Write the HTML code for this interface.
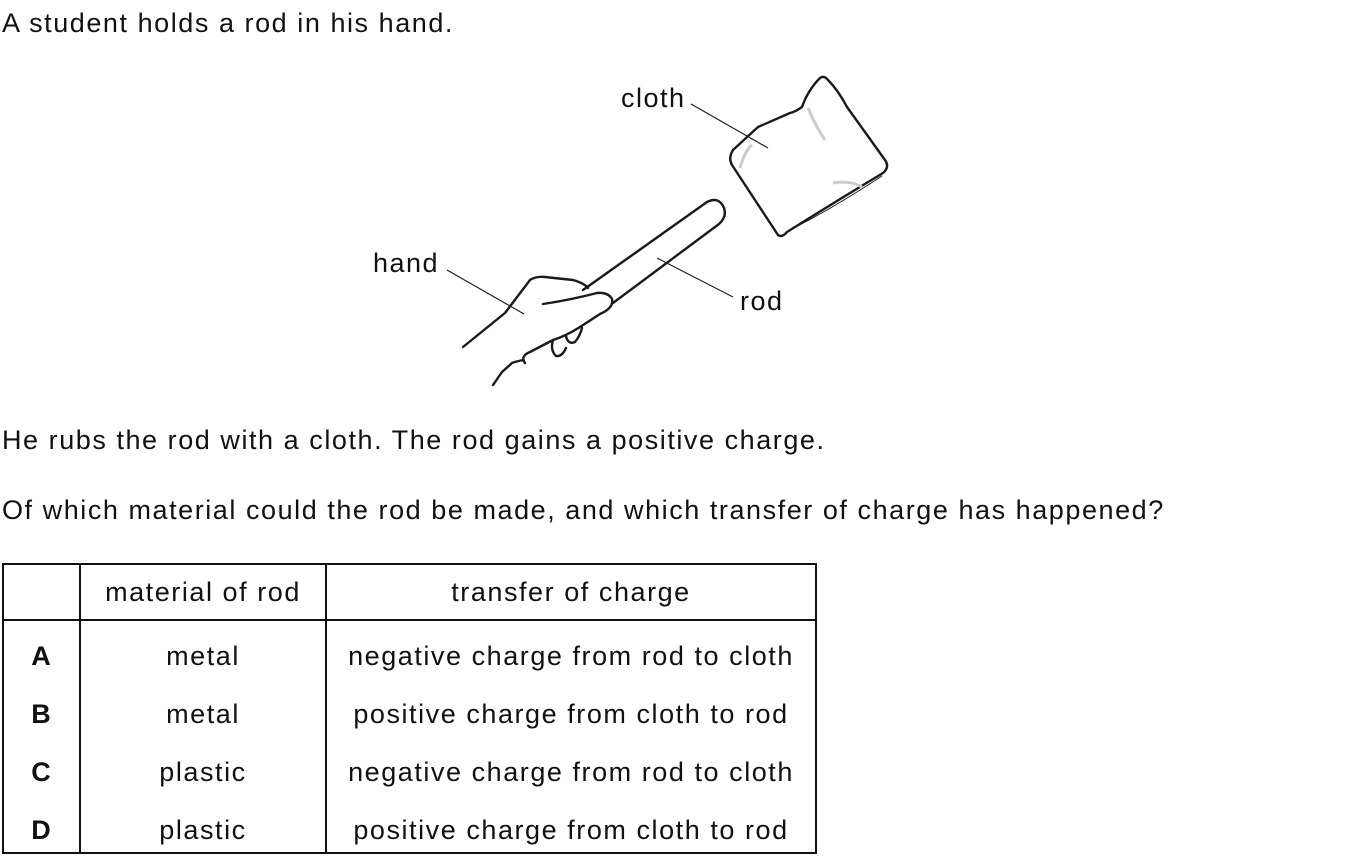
<!DOCTYPE html>
<html><head><meta charset="utf-8"><style>
body{margin:0;width:1354px;height:864px;background:#fff;position:relative;overflow:hidden;font-family:"Liberation Sans",sans-serif;color:#111}
.t{position:absolute;white-space:nowrap;font-size:27px;line-height:30px;letter-spacing:1.55px}
.c{position:absolute;text-align:center;font-size:27px;line-height:30px;white-space:nowrap;letter-spacing:1.55px}
.b{font-weight:bold;letter-spacing:0}
.hl{position:absolute;background:#111}
</style></head><body>
<div class="t" style="left:2px;top:8px">A student holds a rod in his hand.</div>
<svg style="position:absolute;left:0;top:0" width="1354" height="420">
<g fill="none" stroke="#1a1a1a" stroke-width="2.4" stroke-linejoin="round" stroke-linecap="round">
<path d="M583 290 L707 202 Q719 196 724 208 Q727 217 719 224 L613 303"/>
<path d="M820 78 Q808 90 802 107 Q795 112 790 113 L758 127 L733 150 Q728 158 732 165 L778 235 Q782 238 787 232 Q830 205 883 173 Q890 167 885 160 L847 107 Q838 90 828 80 Q824 75 820 78 Z"/>
<path d="M463 347 L505 313 L530 280 Q536 276 545 277 L573 280 Q584 283 588 288"/>
<path d="M543 304 Q570 300 597 293 Q608 292 612 299 Q614 308 600 314 L580 327 Q566 336 553 340 L530 352 Q520 356 525 363 L523 360 Q514 362 512 363 L502 372 L493 385"/>
<path d="M553 340 Q550 350 556 356 Q562 357 566 348 M566 336 Q568 345 575 342 Q580 336 582 328"/>
<path d="M788 231 Q830 210 882 176" stroke-width="1"/>
</g>
<g fill="none" stroke="#ccc" stroke-width="3">
<path d="M808 108 Q815 125 825 140"/><path d="M740 168 Q745 150 752 145"/><path d="M833 183 Q850 180 862 187"/>
</g>
<g stroke="#222" stroke-width="1.2">
<line x1="691" y1="104" x2="768" y2="148"/>
<line x1="447" y1="270" x2="524" y2="314"/>
<line x1="657" y1="258" x2="733" y2="297"/>
</g>
<g font-family="Liberation Sans, sans-serif" font-size="27" fill="#111" letter-spacing="1.5">
<text x="621" y="107">cloth</text>
<text x="373" y="272">hand</text>
<text x="740" y="310">rod</text>
</g>
</svg>
<div class="t" style="left:2px;top:425px">He rubs the rod with a cloth. The rod gains a positive charge.</div>
<div class="t" style="left:2px;top:495px">Of which material could the rod be made, and which transfer of charge has happened?</div>
<div style="position:absolute;left:2px;top:563px;width:811px;height:287px;border:2px solid #111"></div>
<div class="hl" style="left:79px;top:563px;width:1.5px;height:290px"></div>
<div class="hl" style="left:325px;top:563px;width:1.5px;height:290px"></div>
<div class="hl" style="left:2px;top:619px;width:814px;height:1.5px"></div>
<div class="c" style="left:80px;width:246px;top:577px">material of rod</div>
<div class="c" style="left:326px;width:490px;top:577px">transfer of charge</div>
<div class="c b" style="left:2px;width:78px;top:641px">A</div>
<div class="c" style="left:80px;width:246px;top:641px">metal</div>
<div class="c" style="left:326px;width:490px;top:641px">negative charge from rod to cloth</div>
<div class="c b" style="left:2px;width:78px;top:699px">B</div>
<div class="c" style="left:80px;width:246px;top:699px">metal</div>
<div class="c" style="left:326px;width:490px;top:699px">positive charge from cloth to rod</div>
<div class="c b" style="left:2px;width:78px;top:757px">C</div>
<div class="c" style="left:80px;width:246px;top:757px">plastic</div>
<div class="c" style="left:326px;width:490px;top:757px">negative charge from rod to cloth</div>
<div class="c b" style="left:2px;width:78px;top:815px">D</div>
<div class="c" style="left:80px;width:246px;top:815px">plastic</div>
<div class="c" style="left:326px;width:490px;top:815px">positive charge from cloth to rod</div>
</body></html>
